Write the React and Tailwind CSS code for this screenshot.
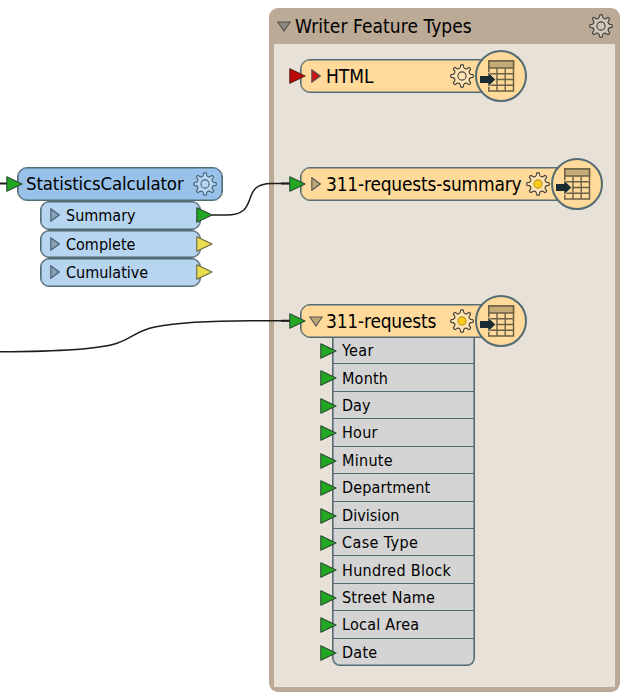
import React from "react";

const font = "font-['DejaVu_Sans_Condensed','DejaVu_Sans',sans-serif] [font-stretch:condensed]";

const gearPath = (() => {
  const pts = [];
  const n = 8;
  const at = (r, a) => `${(12 + r * Math.sin(a)).toFixed(2)} ${(12 - r * Math.cos(a)).toFixed(2)}`;
  for (let i = 0; i < n; i++) {
    const c = (i * 2 * Math.PI) / n;
    pts.push(`${i ? "L" : "M"}${at(9, c - 0.18)}`);
    pts.push(`L${at(10.9, c - 0.13)} Q${at(11.9, c)} ${at(10.9, c + 0.13)}`);
    pts.push(`L${at(9, c + 0.18)} Q${at(6.9, c + Math.PI / n)} ${at(9, c + (2 * Math.PI) / n - 0.18)}`);
  }
  return pts.join(" ") + "Z";
})();

function Gear({ fill, center = "none", stroke = "#45433c" }) {
  return (
    <svg viewBox="0 0 24 24" className="h-6 w-6 shrink-0">
      <path d={gearPath} fill={fill} stroke={stroke} strokeWidth="1.15" strokeLinejoin="round" />
      <circle cx="12" cy="12" r="4.1" fill={center} stroke={center === "#ffcd1c" ? "#b99422" : stroke} strokeWidth="1.1" />
    </svg>
  );
}

function Port({ className, fill, stroke = "#294b32" }) {
  return (
    <svg viewBox="0 0 17 16" className={`absolute h-4 w-[17px] ${className}`}>
      <path d="M.8 .8 16 8 .8 15.2Z" fill={fill} stroke={stroke} strokeWidth="1.1" strokeLinejoin="round" />
    </svg>
  );
}

function Expander({ fill, stroke = "#555", open = false }) {
  return open ? (
    <svg viewBox="0 0 14 11" className="h-[11px] w-[14px] shrink-0">
      <path d="M.8 1H13.2L7 10Z" fill={fill} stroke={stroke} strokeWidth="1.1" />
    </svg>
  ) : (
    <svg viewBox="0 0 10 14" className="h-[14px] w-[10px] shrink-0">
      <path d="M.8 .7 9.3 7 .8 13.3Z" fill={fill} stroke={stroke} strokeWidth="1.1" />
    </svg>
  );
}

function TableBadge() {
  return (
    <div className="absolute -right-[27px] -top-[9.5px] h-[52px] w-[52px] rounded-full border-2 border-[#536b73] bg-[#ffda9b]">
      <svg viewBox="0 0 48 48" className="h-12 w-12">
        <path d="M11.8 9H36.5V39H11.8Z" fill="#ffda9b" stroke="#6b6045" strokeWidth="1.5" />
        <path d="M11.8 9H36.5V16H11.8Z" fill="#c5ab78" stroke="#6b6045" strokeWidth="1.5" />
        <path d="M20 16V39M28.2 16V39M12 21.8H36.5M12 27.5H36.5M12 33.2H36.5" stroke="#6b6045" strokeWidth="1.4" />
        <path d="M3 23.2H10.5V19.2L19.2 27.5 10.5 36V31.4H3Z" fill="#ffda9b" />
        <path d="M3 24.1H11.3V20.7L18.2 27.5 11.3 34.3V30.9H3Z" fill="#1b2b34" />
      </svg>
    </div>
  );
}

function Writer({ place, name, spacing, port, portStroke, expander, expanderStroke, open, gearFill, gearCenter }) {
  return (
    <div className={`absolute h-[34px] ${place}`}>
      <div className="flex h-full items-center rounded-l-[10px] border border-[#536b73] bg-[#ffda9b] pl-px pr-[36px] shadow-[inset_0_0_0_0.6px_#536b73]">
        <div className="flex w-[24px] shrink-0 items-center justify-center pl-[3px]">
          <Expander fill={expander} stroke={expanderStroke} open={open} />
        </div>
        <span className={`grow whitespace-nowrap text-[19px] leading-none ${spacing}`}>{name}</span>
        <div className="-mr-[11px]"><Gear fill={gearFill} center={gearCenter} /></div>
      </div>
      <Port className="-left-[11.5px] top-[8.5px]" fill={port} stroke={portStroke} />
      <TableBadge />
    </div>
  );
}

const attributes = [
  ["Year", "tracking-[0.4px]"],
  ["Month", "tracking-[0.2px]"],
  ["Day", "tracking-[0px]"],
  ["Hour", "tracking-[0.25px]"],
  ["Minute", "tracking-[0.3px]"],
  ["Department", "tracking-[0.12px]"],
  ["Division", "tracking-[0.05px]"],
  ["Case Type", "tracking-[0.4px]"],
  ["Hundred Block", "tracking-[0.3px]"],
  ["Street Name", "tracking-[0.2px]"],
  ["Local Area", "tracking-[0.25px]"],
  ["Date", "tracking-[0.25px]"],
];

const outputs = [
  ["Summary", "#22a722", "tracking-[0px]"],
  ["Complete", "#e9df50", "tracking-[0px]"],
  ["Cumulative", "#e9df50", "tracking-[0px]"],
];

export default function App() {
  return (
    <div className={`relative h-[694px] w-[630px] overflow-hidden bg-white text-black ${font}`}>
      <section className="absolute left-[269px] top-[8px] flex h-[684px] w-[350.5px] flex-col rounded-[9px] bg-[#bbaa95] px-[5px] pb-[5px]">
        <header className="flex h-9 shrink-0 items-center pl-[3px] pr-[2px]">
          <Expander open fill="#8c887f" stroke="#555149" />
          <span className="ml-[4px] grow whitespace-nowrap text-[19px] leading-none tracking-[0.08px]">Writer Feature Types</span>
          <Gear fill="#d0c6b8" />
        </header>
        <div className="grow bg-[#e8e1d8]" />
      </section>

      <svg viewBox="0 0 630 694" className="absolute inset-0 h-full w-full" fill="none" stroke="#1c1c1c" strokeWidth="1.5">
        <path d="M0 183.5H8" strokeWidth="2" />
        <path d="M211 215H226C262 215 238 183.5 272 183.5H290" />
        <path d="M281 183.5H290M281 320.7H290" strokeWidth="2" />
        <path d="M0 351.7C60 351.5 100 349 117 343.2C133 337.5 137 330.5 155 327C180 322 220 320.7 250 320.7H290" />
      </svg>

      <div className="absolute left-[17px] top-[167px] w-[206px]">
        <div className="flex h-[34px] items-center rounded-[10px] border border-[#536b73] bg-[#99c2ea] pl-[8px] pr-[5px] shadow-[inset_0_0_0_0.6px_#536b73]">
          <span className="grow whitespace-nowrap text-[18.5px] leading-none tracking-[-0.15px]">StatisticsCalculator</span>
          <Gear fill="#b8d6f2" stroke="#4c6578" />
        </div>
        <Port className="-left-[11px] top-[8.5px]" fill="#22a722" />
        <div className="ml-[23px] flex w-[161px] flex-col">
          {outputs.map(([name, color, spacing]) => (
            <div key={name} className="relative flex h-[28.6px] items-center rounded-[9px] border border-[#536b73] bg-[#b7d4f0] pl-[9px] shadow-[inset_0_0_0_0.6px_#536b73]">
              <Expander fill="#8aa0b3" stroke="#465e70" />
              <span className={`ml-[6px] whitespace-nowrap pt-[2px] text-[16px] leading-none ${spacing}`}>{name}</span>
              <Port className="-right-[13px] top-[5px]" fill={color} stroke={color === "#22a722" ? "#294b32" : "#68653e"} />
            </div>
          ))}
        </div>
      </div>

      <Writer place="left-[300px] top-[59px] w-[200px]" name="HTML" spacing="tracking-[0px]" port="#bd0909" portStroke="#602020" expander="#cf1212" gearFill="#ffe4b6" />
      <Writer place="left-[300px] top-[167px] w-[276px]" name="311-requests-summary" spacing="tracking-[-0.2px]" port="#22a722" expander="#bda477" gearFill="#ffe4b6" gearCenter="#ffcd1c" />

      <div className="absolute left-[332px] top-[337px] flex h-[329px] w-[143px] flex-col rounded-b-[8px] border-x border-b border-[#536b73] bg-[#d4d4d4] shadow-[inset_0_0_0_0.6px_#536b73]">
        {attributes.map(([name, spacing], i) => (
          <div key={name} className={`relative flex min-h-0 flex-1 items-center pl-[9px] pt-[2px] ${i < 11 ? "border-b border-[#536b73]" : ""}`}>
            <Port className="-left-[13px] top-[6px]" fill="#22a722" />
            <span className={`whitespace-nowrap text-[16px] leading-none ${spacing}`}>{name}</span>
          </div>
        ))}
      </div>
      <Writer place="left-[300px] top-[304px] w-[200px]" name="311-requests" spacing="tracking-[-0.2px]" port="#22a722" expander="#bda477" open gearFill="#ffe4b6" gearCenter="#ffcd1c" />
    </div>
  );
}
